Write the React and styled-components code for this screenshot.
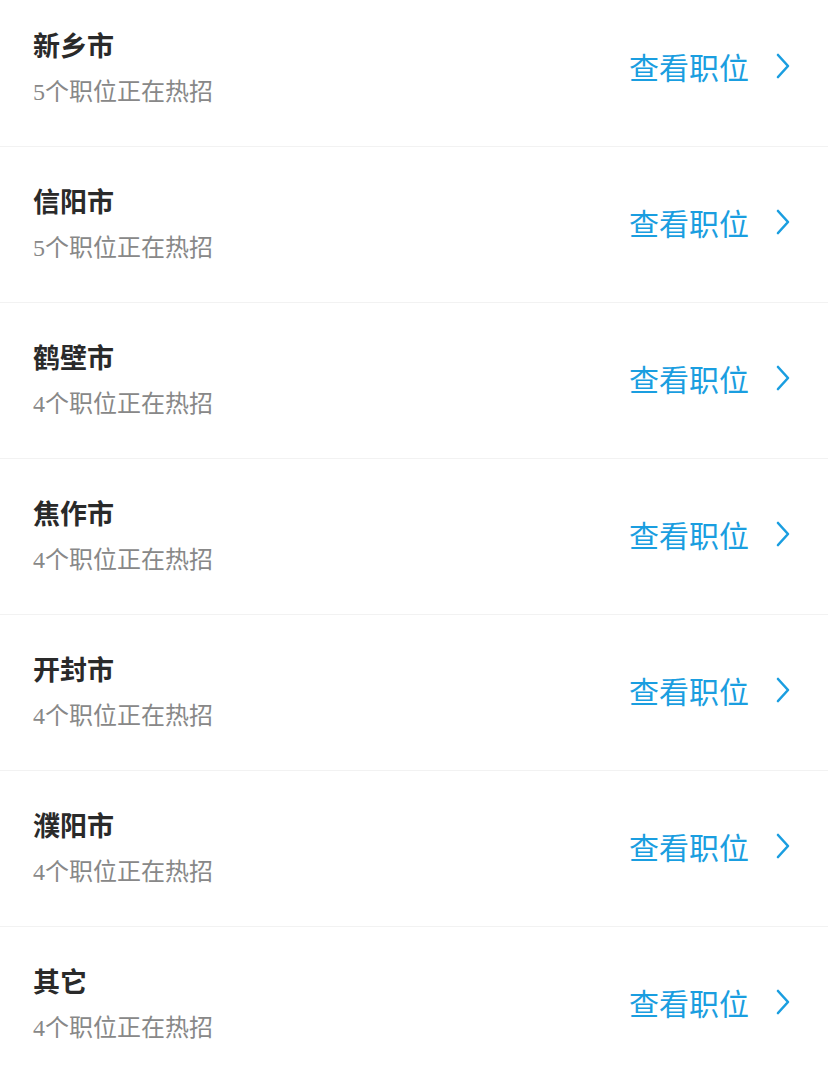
import React from 'react';
import styled, { createGlobalStyle } from 'styled-components';

const GlobalStyle = createGlobalStyle`
    html, body {
        margin: 0;
        padding: 0;
        background: #fff;
        overflow: hidden;
    }
    body {
        font-family: "Noto Sans CJK SC", "Noto Sans", sans-serif;
    }
`;

const List = styled.div`
    margin-top: -9px;
    background: #fff;
`;

const Row = styled.div`
    box-sizing: border-box;
    height: 156px;
    display: flex;
    align-items: center;
    justify-content: space-between;
    padding: 0 38px 0 33px;
    border-bottom: 1.5px solid #f2f2f2;
`;

const Info = styled.div`
    display: flex;
    flex-direction: column;
    gap: 11px;
`;

const City = styled.div`
    font-size: 27px;
    line-height: 36px;
    font-weight: 700;
    color: #2a2a2a;
`;

const Count = styled.div`
    font-family: "Liberation Serif", "Noto Sans CJK SC", serif;
    font-size: 24px;
    line-height: 36px;
    color: #888;
`;

const Link = styled.a`
    display: flex;
    align-items: center;
    gap: 27px;
    margin-top: -5px;
    font-size: 30px;
    line-height: 40px;
    color: #1a9ee0;
    text-decoration: none;
    cursor: pointer;
`;

const Chevron = () => (
    <svg width="14" height="26" viewBox="0 0 14 26" fill="none">
        <path d="M2 2 L12 13 L2 24" stroke="#1a9ee0" strokeWidth="2.6" strokeLinecap="round" strokeLinejoin="round" />
    </svg>
);

const cities = [
    { name: '新乡市', count: 5 },
    { name: '信阳市', count: 5 },
    { name: '鹤壁市', count: 4 },
    { name: '焦作市', count: 4 },
    { name: '开封市', count: 4 },
    { name: '濮阳市', count: 4 },
    { name: '其它', count: 4 },
];

const App = () => {
    return (
        <>
            <GlobalStyle />
            <List>
                {cities.map((c) => (
                    <Row key={c.name}>
                        <Info>
                            <City>{c.name}</City>
                            <Count>{c.count}个职位正在热招</Count>
                        </Info>
                        <Link>
                            查看职位
                            <Chevron />
                        </Link>
                    </Row>
                ))}
            </List>
        </>
    );
};

export default App;
